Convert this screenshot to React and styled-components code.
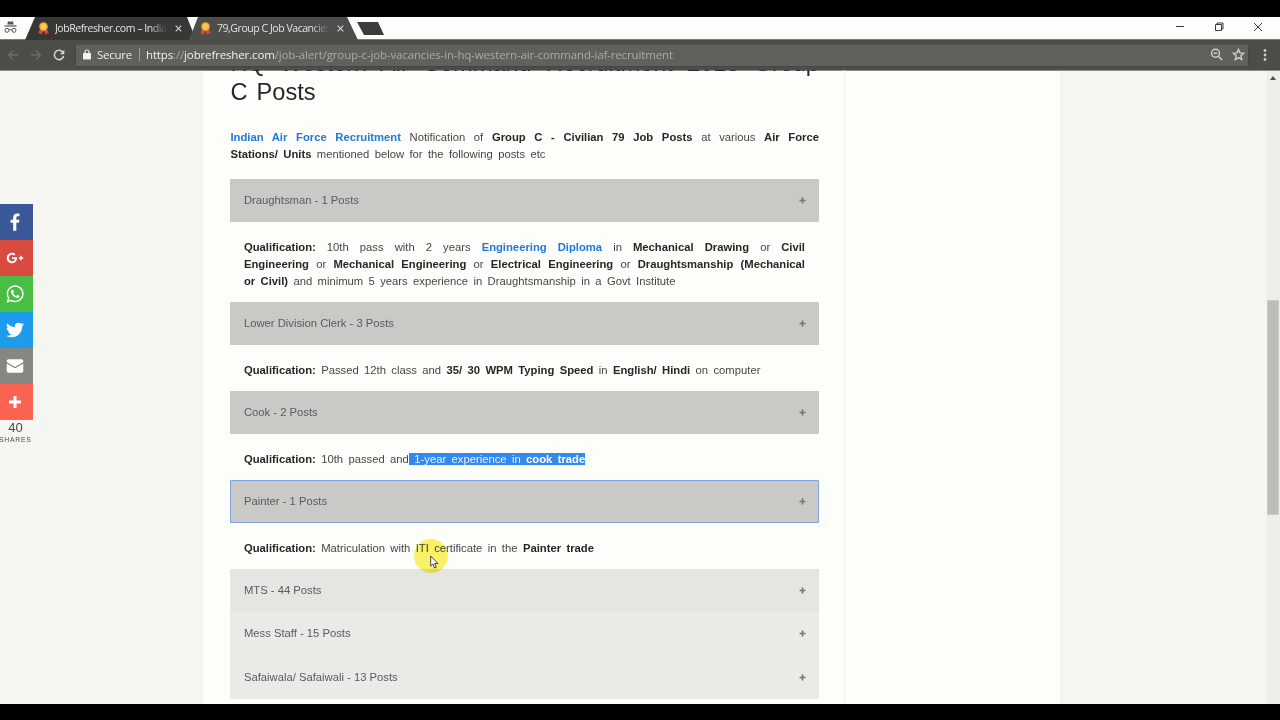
import React from 'react'
import styled, { createGlobalStyle } from 'styled-components'

const GlobalStyle = createGlobalStyle`
  * {
    box-sizing: border-box;
  }
  body {
    margin: 0;
    background: #000;
    overflow: hidden;
  }
`

const Screen = styled.div`
  width: 1280px;
  height: 720px;
  padding: 17px 0 16px;
  background: #000;
  display: flex;
  flex-direction: column;
  position: relative;
  overflow: hidden;
`

/* ---------- browser chrome ---------- */

const TabStrip = styled.div`
  height: 23px;
  flex: none;
  background: #fdfefa;
  border-bottom: 1px solid #7d7e7a;
  display: flex;
  font-family: 'Open Sans', 'Noto Sans', sans-serif;
`

const Incognito = styled.svg`
  width: 13px;
  height: 14px;
  margin: 3px 8px 0 4px;
  flex: none;
`

const Tab = styled.div`
  width: ${({ active }) => (active ? '169px' : '173px')};
  height: 23px;
  flex: none;
  margin-left: ${({ active }) => (active ? '-9px' : '0')};
  padding-left: ${({ active }) => (active ? '10px' : '12px')};
  display: flex;
  align-items: center;
  background: ${({ active }) => (active ? '#4d4e4a' : '#373834')};
  clip-path: ${({ active }) =>
    active
      ? 'polygon(9px 0, 158px 0, 100% 100%, 0 100%)'
      : 'polygon(10px 0, 162px 0, 171px 100%, 0 100%)'};
`

const TabTitle = styled.div`
  width: 115px;
  margin: 0 5px;
  overflow: hidden;
  white-space: nowrap;
  font-size: 10.5px;
  line-height: 22px;
  padding-bottom: 1px;
  letter-spacing: ${({ spacing }) => spacing};
  color: #e3e4e0;
  mask-image: linear-gradient(to right, #000 82%, transparent 98%);
`

const NewTab = styled.div`
  width: 27px;
  height: 13px;
  margin: 5px 0 0 -1px;
  background: #3c3d39;
  clip-path: polygon(0 0, 21px 0, 100% 100%, 7px 100%);
`

const WindowButtons = styled.div`
  margin: 5px 17px 0 auto;
  display: flex;
  gap: 29px;

  svg {
    width: 10px;
    height: 10px;
    fill: none;
    stroke: #3b3c39;
  }
`

const Toolbar = styled.div`
  height: 30px;
  flex: none;
  background: #4c4d49;
  display: flex;
  align-items: center;
  font-family: 'Open Sans', 'Noto Sans', sans-serif;
`

const NavIcons = styled.div`
  width: 75px;
  padding-left: 7px;
  display: flex;
  gap: 11px;

  svg {
    width: 12px;
    height: 12px;
    fill: none;
    stroke-width: 1.5;
  }
`

const AddressBar = styled.div`
  width: 1174px;
  height: 23px;
  padding: 0 3px 1px 7px;
  background: #60615d;
  border: 1px solid #454642;
  border-top-color: #52534f;
  border-radius: 2px;
  display: flex;
  align-items: center;
  font-size: 11.5px;
  line-height: 16px;
  color: #eeefeb;
`

const Secure = styled.span`
  margin-left: 6px;
  letter-spacing: -0.25px;
`

const Divider = styled.span`
  width: 1px;
  height: 13px;
  margin: 0 6px 0 7px;
  background: #9b9c98;
`

const Url = styled.span`
  color: #a9aaa6;
  letter-spacing: -0.14px;
  white-space: nowrap;

  b {
    font-weight: normal;
    color: #f1f2ee;
  }
`

const AddressIcons = styled.div`
  margin-left: auto;
  display: flex;
  gap: 9px;

  svg {
    width: 13px;
    height: 13px;
    fill: none;
    stroke: #cfd0cc;
    stroke-width: 1.4;
  }
`

const Kebab = styled.svg`
  width: 4px;
  height: 12px;
  margin-left: 14px;
  fill: #cfd0cc;
`

/* ---------- page ---------- */

const Viewport = styled.main`
  height: 634px;
  flex: none;
  display: flex;
  background: #f5f6f2;
  overflow: hidden;
  box-shadow: inset 0 1px 0 #8d8e8a;
`

const ShareColumn = styled.aside`
  width: 203px;
  padding-top: 133.5px;
`

const ShareButton = styled.a`
  width: 33.4px;
  height: 36px;
  padding-left: 3px;
  display: flex;
  align-items: center;
  background: ${({ color }) => color};

  svg {
    width: 24px;
    height: 24px;
    fill: #fff;
  }
`

const ShareCount = styled.div`
  width: 31px;
  font-family: 'Liberation Sans', Arial, sans-serif;
  font-size: 13px;
  line-height: 15px;
  text-align: center;
  color: #4a4b49;
`

const ShareLabel = styled.div`
  font-family: 'Liberation Sans', Arial, sans-serif;
  font-size: 6.8px;
  line-height: 9px;
  letter-spacing: 0.75px;
  margin-left: -1px;
  color: #4a4b49;
`

const Article = styled.article`
  width: 642px;
  padding: 0 25px 0 27.4px;
  background: #fdfefa;
  border-right: 1px solid #f0f1ee;
  font-family: 'Liberation Sans', Arial, sans-serif;
  font-size: 11.25px;
  line-height: 16.9px;
  color: #45464a;
  box-shadow: inset 0 1px 0 #8d8e8a;
`

const Sidebar = styled.div`
  width: 215px;
  background: #fdfefa;
  box-shadow: inset 0 1px 0 #8d8e8a;
`

const Title = styled.h1`
  margin: -21.4px 0 21.2px;
  font-size: 23.6px;
  font-weight: normal;
  line-height: 29.6px;
  text-align: justify;
  word-spacing: 2.6px;
  color: #26272b;
`

const Text = styled.p`
  margin: 0;
  text-align: justify;
  word-spacing: 2.25px;

  b {
    color: #26272b;
  }
`

const TextLink = styled.a`
  font-weight: bold;
  color: #2079dc;
`

const Selected = styled.span`
  background: #3189ee;
  color: #e6f1fd;

  b {
    color: #fff;
  }
`

const Accordion = styled.div`
  width: 588.5px;
  margin-top: 16.4px;
`

const rowColors = {
  open: '#c9cac6',
  hover: '#e5e6e2',
  closed: '#eaebe7',
}

const AccordionHeader = styled.div`
  height: 43.3px;
  padding: 0 13px 0 13.5px;
  display: flex;
  align-items: center;
  justify-content: space-between;
  background: ${({ state }) => rowColors[state]};
  color: #5a5b5a;
  outline: ${({ focused }) => (focused ? '1px solid #7fa5de' : 'none')};
  outline-offset: -1px;
  border-radius: ${({ focused }) => (focused ? '1px' : '0')};

  svg {
    width: 7px;
    height: 7px;
    stroke: #767775;
    stroke-width: 1.7;
  }
`

const AccordionPanel = styled.div`
  padding: 16.8px 13.9px 12px 13.5px;
`

const Scrollbar = styled.div`
  width: 13px;
  margin-left: auto;
  padding-top: 6px;
  background: #eeefeb;
  display: flex;
  flex-direction: column;
  box-shadow: inset 0 1px 0 #8d8e8a;

  svg {
    width: 6px;
    height: 4px;
    margin-left: 3px;
    fill: #50514e;
  }
`

const Thumb = styled.div`
  width: 12px;
  height: 215px;
  margin-top: 220px;
  background: #bdbeba;
  border: 1px solid #cbccc8;
`

/* highlighted mouse pointer that floats over the page */
const Pointer = styled.div`
  position: absolute;
  left: 414px;
  top: 539px;
  width: 34px;
  height: 34px;
  border-radius: 50%;
  background: #f8f268;
  mix-blend-mode: multiply;
`

const PointerArrow = styled.svg`
  position: absolute;
  left: 430px;
  top: 555px;
  width: 9px;
  height: 14px;
`

const Favicon = () => (
  <svg width="13" height="13" viewBox="0 0 13 13">
    <path d="M3.500 6 1 11.500l2-.2L4.300 13 6.500 8.500 8.700 13l1.300-1.700 2 .2L9.500 6z" fill="#d4483f" />
    <circle cx="6.500" cy="4.600" r="4.300" fill="#e9a93a" />
    <circle cx="6.500" cy="4.600" r="3" fill="#f7c84f" />
  </svg>
)

const TabClose = () => (
  <svg width="7" height="7" viewBox="0 0 7 7" stroke="#d0d1cd" strokeWidth="1.2">
    <path d="M.7.7l5.600 5.600M6.300.7.7 6.300" />
  </svg>
)

const shares = [
  {
    name: 'facebook',
    color: '#3b5998',
    path: 'M17.78 27.5V17.008h3.522l.527-4.09h-4.05v-2.61c0-1.182.33-1.99 2.023-1.99h2.166V4.66c-.375-.05-1.66-.16-3.155-.16-3.123 0-5.26 1.905-5.26 5.405v3.016h-3.53v4.09h3.53V27.5h4.223z',
  },
  {
    name: 'google-plus',
    color: '#d94b41',
    path: 'M27 15h-2v-2h-2v2h-2v2h2v2h2v-2h2m-15-2v2.4h3.97c-.16 1.03-1.2 3.02-3.97 3.02-2.39 0-4.34-1.98-4.34-4.42s1.95-4.42 4.34-4.42c1.36 0 2.27.58 2.79 1.08l1.9-1.83C15.47 9.69 13.89 9 12 9c-3.87 0-7 3.13-7 7s3.13 7 7 7c4.04 0 6.72-2.84 6.72-6.84 0-.46-.05-.81-.11-1.16H12z',
  },
  {
    name: 'whatsapp',
    color: '#48bf43',
    path: 'M16.21 4.41C9.973 4.41 4.917 9.465 4.917 15.7c0 2.134.592 4.13 1.62 5.832L4.5 27.59l6.25-2.002a11.241 11.241 0 0 0 5.46 1.404c6.234 0 11.29-5.055 11.29-11.29 0-6.237-5.056-11.292-11.29-11.292zm0 20.69c-1.91 0-3.69-.57-5.173-1.553l-3.61 1.156 1.173-3.49a9.345 9.345 0 0 1-1.79-5.512c0-5.18 4.217-9.4 9.4-9.4 5.183 0 9.397 4.22 9.397 9.4 0 5.188-4.214 9.4-9.398 9.4zm5.293-6.832c-.284-.155-1.673-.906-1.934-1.012-.265-.106-.455-.16-.658.12s-.78.91-.954 1.096c-.176.186-.345.203-.628.048-.282-.154-1.2-.494-2.264-1.517-.83-.795-1.373-1.76-1.53-2.055-.158-.295 0-.445.15-.584.134-.124.3-.326.45-.488.15-.163.203-.28.306-.47.104-.19.06-.36-.005-.506-.066-.147-.59-1.587-.81-2.173-.218-.586-.46-.498-.63-.505-.168-.007-.358-.038-.55-.045-.19-.007-.51.054-.78.332-.277.274-1.05.943-1.1 2.362-.055 1.418.926 2.826 1.064 3.023.137.2 1.874 3.272 4.76 4.537 2.888 1.264 2.9.878 3.43.85.53-.027 1.734-.633 2-1.297.266-.664.287-1.24.22-1.363-.07-.123-.26-.203-.54-.357z',
  },
  {
    name: 'twitter',
    color: '#1d9bec',
    path: 'M28 8.557a9.913 9.913 0 0 1-2.828.775 4.93 4.93 0 0 0 2.166-2.725 9.738 9.738 0 0 1-3.13 1.194 4.92 4.92 0 0 0-3.593-1.55 4.924 4.924 0 0 0-4.794 6.049c-4.09-.21-7.72-2.17-10.15-5.15a4.942 4.942 0 0 0-.665 2.477c0 1.71.87 3.214 2.19 4.1a4.968 4.968 0 0 1-2.23-.616v.06c0 2.39 1.7 4.38 3.952 4.83-.414.115-.85.174-1.297.174-.318 0-.626-.03-.928-.086a4.935 4.935 0 0 0 4.6 3.42 9.893 9.893 0 0 1-6.114 2.107c-.398 0-.79-.023-1.175-.068a13.953 13.953 0 0 0 7.55 2.213c9.056 0 14.01-7.507 14.01-14.013 0-.213-.005-.426-.015-.637.96-.695 1.795-1.56 2.455-2.55z',
  },
  {
    name: 'email',
    color: '#868783',
    path: 'M27 22.757c0 1.24-.988 2.243-2.19 2.243H7.19C5.98 25 5 23.994 5 22.757V13.67c0-.556.39-.773.855-.496l8.78 5.238c.782.467 1.95.467 2.73 0l8.78-5.238c.472-.28.855-.063.855.495v9.087zM27 9.243C27 8.006 26.02 7 24.81 7H7.19C5.988 7 5 8.004 5 9.243v.465c0 .554.385 1.232.857 1.514l9.61 5.733c.267.16.8.16 1.067 0l9.61-5.733c.473-.283.856-.96.856-1.514v-.465z',
  },
  { name: 'more', color: '#fb6352', path: 'M14 8h4v16h-4zM8 14h16v4H8z' },
]

const posts = [
  {
    title: 'Draughtsman - 1 Posts',
    state: 'open',
    body: (
      <>
        10th pass with 2 years <TextLink>Engineering Diploma</TextLink> in <b>Mechanical Drawing</b> or{' '}
        <b>Civil Engineering</b> or <b>Mechanical Engineering</b> or <b>Electrical Engineering</b> or{' '}
        <b>Draughtsmanship (Mechanical or&nbsp;Civil)</b> and minimum 5 years experience in Draughtsmanship in
        a Govt Institute
      </>
    ),
  },
  {
    title: 'Lower Division Clerk - 3 Posts',
    state: 'open',
    body: (
      <>
        Passed 12th class and <b>35/ 30 WPM Typing Speed</b> in <b>English/ Hindi</b> on computer
      </>
    ),
  },
  {
    title: 'Cook - 2 Posts',
    state: 'open',
    body: (
      <>
        10th passed and
        <Selected>
          {' '}
          1-year experience in <b>cook trade</b>
        </Selected>
      </>
    ),
  },
  {
    title: 'Painter - 1 Posts',
    state: 'open',
    focused: true,
    body: (
      <>
        Matriculation with ITI certificate in the <b>Painter trade</b>
      </>
    ),
  },
  { title: 'MTS - 44 Posts', state: 'hover' },
  { title: 'Mess Staff - 15 Posts', state: 'closed' },
  { title: 'Safaiwala/ Safaiwali - 13 Posts', state: 'closed' },
]

function BrowserChrome() {
  return (
    <>
      <TabStrip>
        <Incognito viewBox="0 0 13 14" fill="none" stroke="#555653">
          <path d="M4 1.200 3.300 4.500h6.400L9 1.200 6.500 1.800z" fill="#555653" stroke="none" />
          <path d="M.5 6h12" strokeWidth="1.200" />
          <circle cx="3" cy="10.300" r="2" />
          <circle cx="10" cy="10.300" r="2" />
          <path d="M5 10q1.500-.8 3 0" />
        </Incognito>
        <Tab>
          <Favicon />
          <TabTitle spacing="-0.45px">JobRefresher.com – India</TabTitle>
          <TabClose />
        </Tab>
        <Tab active>
          <Favicon />
          <TabTitle spacing="-0.45px">79,Group C Job Vacancies</TabTitle>
          <TabClose />
        </Tab>
        <NewTab />
        <WindowButtons>
          <svg viewBox="0 0 10 10">
            <path d="M1 4.500h8" />
          </svg>
          <svg viewBox="0 0 10 10">
            <path d="M1.500 2.500h6v6h-6zM3 2.500v-1.500h6v6H7.500" />
          </svg>
          <svg viewBox="0 0 10 10">
            <path d="M1 1l8 8M9 1 1 9" />
          </svg>
        </WindowButtons>
      </TabStrip>
      <Toolbar>
        <NavIcons>
          <svg viewBox="0 0 12 12" stroke="#6b6c68">
            <path d="M11 6H1.500M6 1.500 1.500 6 6 10.500" />
          </svg>
          <svg viewBox="0 0 12 12" stroke="#6b6c68">
            <path d="M1 6h9.500M6 1.500 10.500 6 6 10.500" />
          </svg>
          <svg viewBox="0 0 12 12" stroke="#d6d7d3">
            <path d="M10 3.300A4.700 4.700 0 1 0 10.700 7" />
            <path d="M11.300.8v4.400H6.900z" fill="#d6d7d3" stroke="none" />
          </svg>
        </NavIcons>
        <AddressBar>
          <svg width="8" height="11" viewBox="0 0 8 11">
            <rect y="4" width="8" height="6.500" rx=".8" fill="#f1f2ee" />
            <path d="M2 4.500V3a2 2 0 0 1 4 0v1.500" fill="none" stroke="#f1f2ee" strokeWidth="1.200" />
          </svg>
          <Secure>Secure</Secure>
          <Divider />
          <Url>
            <b>https</b>://<b>jobrefresher.com</b>
            /job-alert/group-c-job-vacancies-in-hq-western-air-command-iaf-recruitment
          </Url>
          <AddressIcons>
            <svg viewBox="0 0 13 13">
              <circle cx="5.500" cy="5.300" r="4" />
              <path d="M8.500 8.300l3.500 3.700M3.700 5.300h3.600" />
            </svg>
            <svg viewBox="0 0 13 13">
              <path d="M6.500 1.500l1.500 3.400 3.700.4-2.800 2.500.8 3.700-3.200-1.900-3.200 1.900.8-3.700L1.300 5.300 5 4.900z" />
            </svg>
          </AddressIcons>
        </AddressBar>
        <Kebab viewBox="0 0 4 12">
          <circle cx="2" cy="1.500" r="1.400" />
          <circle cx="2" cy="6" r="1.400" />
          <circle cx="2" cy="10.500" r="1.400" />
        </Kebab>
      </Toolbar>
    </>
  )
}

export default function App() {
  return (
    <Screen>
      <GlobalStyle />
      <BrowserChrome />
      <Viewport>
        <ShareColumn>
          {shares.map(({ name, color, path }) => (
            <ShareButton key={name} color={color}>
              <svg viewBox="0 0 32 32">
                <path d={path} />
              </svg>
            </ShareButton>
          ))}
          <ShareCount>40</ShareCount>
          <ShareLabel>SHARES</ShareLabel>
        </ShareColumn>
        <Article>
          <Title>HQ Western Air Command Recruitment 2018 Group C&nbsp;Posts</Title>
          <Text>
            <TextLink>Indian Air Force Recruitment</TextLink> Notification of{' '}
            <b>Group C - Civilian 79 Job Posts</b> at various <b>Air Force Stations/ Units</b> mentioned below
            for the following posts etc
          </Text>
          <Accordion>
            {posts.map(({ title, state, focused, body }) => (
              <React.Fragment key={title}>
                <AccordionHeader state={state} focused={focused}>
                  {title}
                  <svg viewBox="0 0 7 7">
                    <path d="M3.500.5v6M.5 3.500h6" />
                  </svg>
                </AccordionHeader>
                {body && (
                  <AccordionPanel>
                    <Text>
                      <b>Qualification:</b> {body}
                    </Text>
                  </AccordionPanel>
                )}
              </React.Fragment>
            ))}
          </Accordion>
        </Article>
        <Sidebar />
        <Scrollbar>
          <svg viewBox="0 0 6 4">
            <path d="M0 4 3 0l3 4z" />
          </svg>
          <Thumb />
        </Scrollbar>
      </Viewport>
      <Pointer />
      <PointerArrow viewBox="0 0 9 14">
        <path d="M.7 1v10l2.300-2.100L4.500 13l1.800-.8-1.600-3.700h3.200z" fill="#fff" stroke="#333" strokeWidth=".9" />
      </PointerArrow>
    </Screen>
  )
}
